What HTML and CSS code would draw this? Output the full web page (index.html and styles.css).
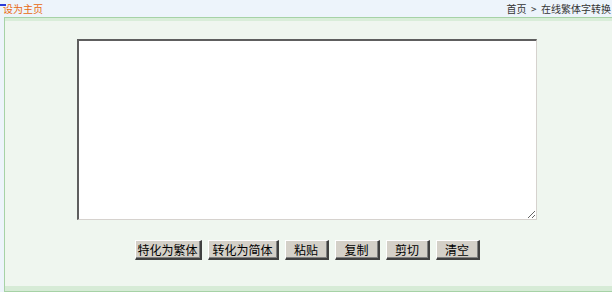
FILE: index.html
```html
<!DOCTYPE html>
<html lang="zh-CN">
<head>
    <meta charset="UTF-8">
    <title>在线繁体字转换</title>
    <link rel="stylesheet" href="styles.css">
</head>
<body>
    <div class="page">
        <div class="topbar">
            <a class="home" href="#"><span class="mark"></span>设为主页</a>
            <div class="crumb">首页 &nbsp;&gt;&nbsp; 在线繁体字转换</div>
        </div>
        <div class="panel">
            <div class="panel-head"></div>
            <div class="tool">
                <textarea class="box"></textarea>
                <div class="buttons">
                    <button class="btn b1">特化为繁体</button>
                    <button class="btn b2">转化为简体</button>
                    <button class="btn b3">粘贴</button>
                    <button class="btn b4">复制</button>
                    <button class="btn b3">剪切</button>
                    <button class="btn b3">清空</button>
                </div>
            </div>
            <div class="panel-foot"></div>
        </div>
    </div>
</body>
</html>
```

FILE: styles.css
```css
html, body {
    margin: 0;
    background-color: #ffffff;
    overflow: hidden;
}

.page {
    width: 612px;
    font-family: "Noto Sans CJK SC", "Liberation Sans", sans-serif;
    font-size: 12px;
    background-color: #edf4fb;
}

.topbar {
    height: 17px;
    display: flex;
    justify-content: space-between;
    align-items: center;
    line-height: 17px;
    font-size: 10px;
}

.home {
    color: #e8680f;
    text-decoration: none;
    padding-left: 3px;
    position: relative;
}

.mark {
    position: absolute;
    left: -2px;
    top: 4px;
    width: 8px;
    height: 2px;
    background-color: #2a3bd8;
}

.crumb {
    color: #333333;
    padding-right: 1px;
}

.panel {
    margin-left: 4px;
    border: 1px solid #a6d2a6;
    border-right: none;
    background-color: #eff6ef;
}

.panel-head {
    height: 3px;
    background-color: #d9edd9;
}

.tool {
    width: 460px;
    margin-left: 72px;
    padding-top: 18px;
    padding-bottom: 26px;
}

.box {
    display: block;
    box-sizing: border-box;
    width: 460px;
    height: 181px;
    margin: 0;
    background-color: #ffffff;
    border-style: solid;
    border-width: 2px 1px 1px 2px;
    border-color: #5e5e5e #d6d2ce #d6d2ce #5e5e5e;
}

.buttons {
    display: flex;
    justify-content: center;
    gap: 6px;
    margin-top: 20px;
}

.btn {
    box-sizing: border-box;
    height: 20px;
    padding: 0;
    font-family: "Noto Sans CJK SC", "Liberation Sans", sans-serif;
    font-size: 12px;
    line-height: 16px;
    color: #000000;
    background-color: #d4d0c8;
    border-style: solid;
    border-width: 1px 2px 2px 1px;
    border-color: #ffffff #404040 #404040 #ffffff;
    box-shadow: inset -1px -1px 0 #808080;
}

.b1 { width: 67px; }
.b2 { width: 71px; }
.b3 { width: 44px; }
.b4 { width: 45px; }

.panel-foot {
    height: 5px;
    background-color: #d6ebd6;
}
```
